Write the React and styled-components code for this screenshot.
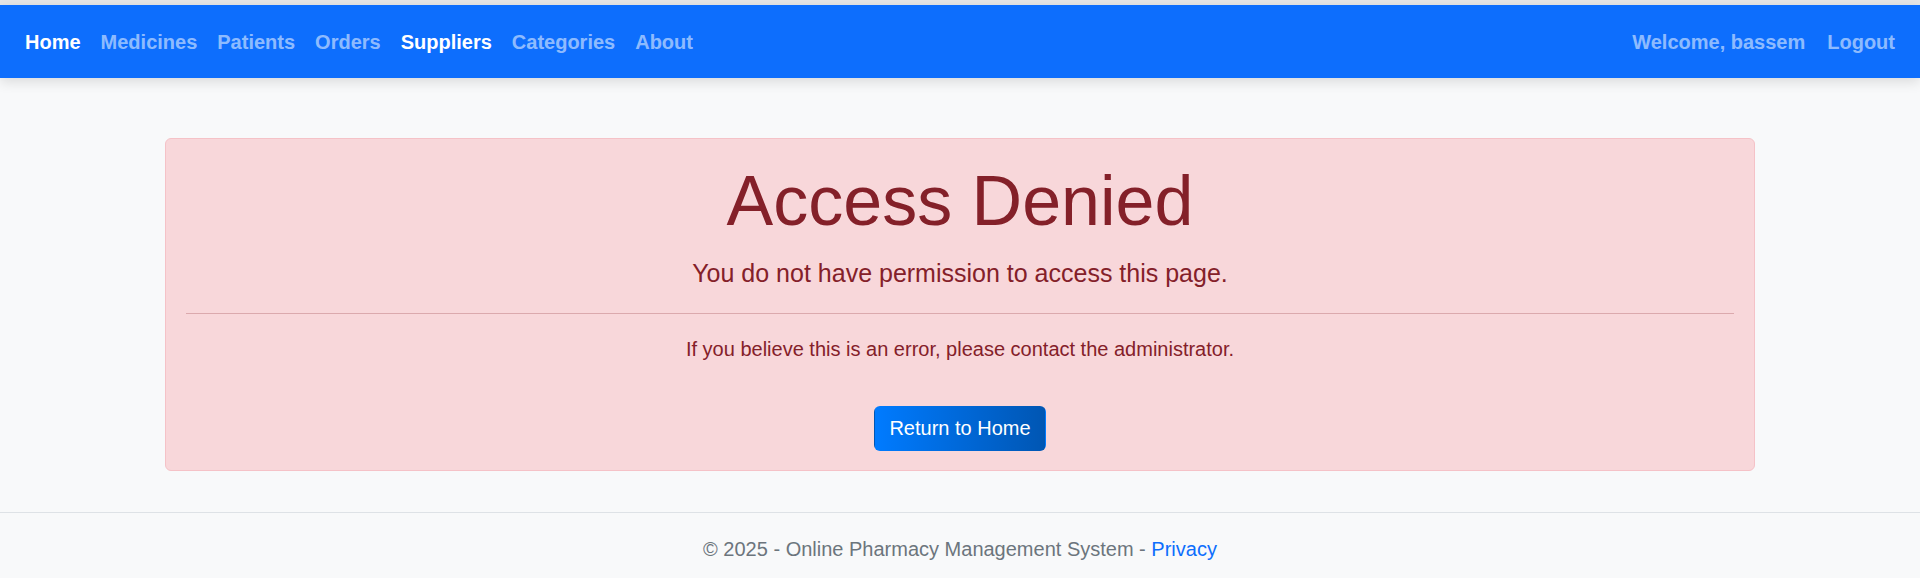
import styled, { createGlobalStyle } from "styled-components";

const GlobalStyle = createGlobalStyle`
  html, body {
    margin: 0;
    padding: 0;
    background: #f8f9fa;
    font-family: "Liberation Sans", Arial, sans-serif;
  }
  * {
    box-sizing: border-box;
  }
`;

const Page = styled.div`
  min-height: 578px;
  border-top: 5px solid #e6e6e6;
  background: #f8f9fa;
`;

const Navbar = styled.nav`
  display: flex;
  justify-content: space-between;
  align-items: center;
  height: 73px;
  padding: 0 15px;
  background: #0d6efd;
  box-shadow: 0 4px 12px rgba(0, 0, 0, 0.12);
`;

const NavList = styled.div`
  display: flex;
  align-items: center;
  gap: ${(p) => p.$gap || 0}px;
`;

const NavLink = styled.a`
  padding: 10px;
  font-size: 20px;
  font-weight: 700;
  line-height: 30px;
  color: ${(p) => (p.$active ? "#ffffff" : "rgba(255, 255, 255, 0.55)")};
  text-decoration: none;
  cursor: pointer;
`;

const Main = styled.main`
  display: flex;
  justify-content: center;
  padding: 60px 0 41px;
`;

const Alert = styled.div`
  width: 1590px;
  padding: 20px 20px 19px;
  background: #f8d7da;
  border: 1px solid #f5c2c7;
  border-radius: 6px;
  color: #842029;
  text-align: center;
`;

const Title = styled.h1`
  margin: 0 0 12px;
  font-size: 70px;
  font-weight: 400;
  line-height: 1.2;
`;

const Lead = styled.p`
  margin: 0 0 20px;
  font-size: 25px;
  line-height: 1.5;
`;

const Divider = styled.hr`
  margin: 0 0 20px;
  border: 0;
  border-top: 1px solid #842029;
  opacity: 0.25;
`;

const Small = styled.p`
  margin: 0 0 42px;
  font-size: 20px;
  line-height: 30px;
`;

const HomeButton = styled.a`
  display: inline-block;
  padding: 7px 14px;
  font-size: 20px;
  line-height: 29px;
  color: #fff;
  background: linear-gradient(90deg, #007bff, #0056b3);
  border: 1px solid transparent;
  border-radius: 6px;
  text-decoration: none;
  cursor: pointer;
`;

const Footer = styled.footer`
  border-top: 1px solid #dee2e6;
  line-height: 72px;
  font-size: 20px;
  color: #6c757d;
  text-align: center;
`;

const FooterLink = styled.a`
  color: #0d6efd;
  text-decoration: none;
`;

const leftLinks = [
  { label: "Home", active: true },
  { label: "Medicines" },
  { label: "Patients" },
  { label: "Orders" },
  { label: "Suppliers", active: true },
  { label: "Categories" },
  { label: "About" },
];

export default function App() {
  return (
    <>
      <GlobalStyle />
      <Page>
        <Navbar>
          <NavList>
            {leftLinks.map((l) => (
              <NavLink key={l.label} $active={l.active}>
                {l.label}
              </NavLink>
            ))}
          </NavList>
          <NavList $gap={2}>
            <NavLink>Welcome, bassem</NavLink>
            <NavLink>Logout</NavLink>
          </NavList>
        </Navbar>
        <Main>
          <Alert>
            <Title>Access Denied</Title>
            <Lead>You do not have permission to access this page.</Lead>
            <Divider />
            <Small>If you believe this is an error, please contact the administrator.</Small>
            <HomeButton>Return to Home</HomeButton>
          </Alert>
        </Main>
        <Footer>
          © 2025 - Online Pharmacy Management System - <FooterLink>Privacy</FooterLink>
        </Footer>
      </Page>
    </>
  );
}
